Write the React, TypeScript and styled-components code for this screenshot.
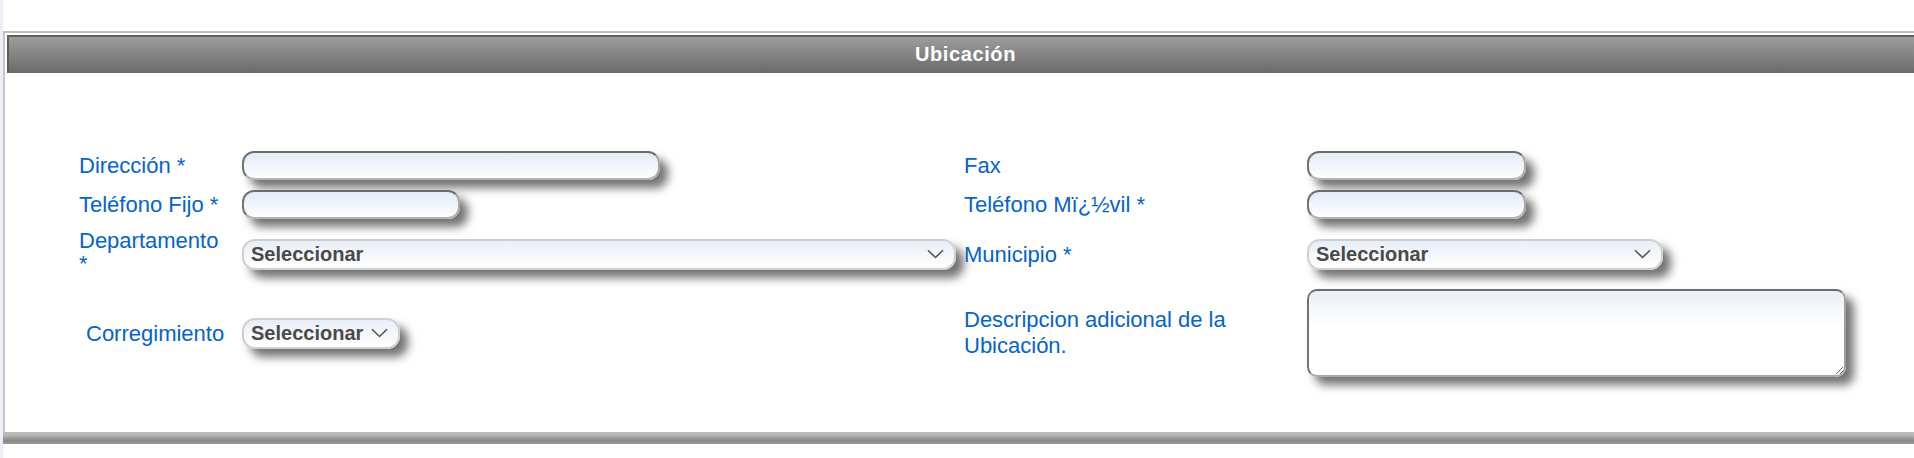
import React from "react";
import styled, { createGlobalStyle } from "styled-components";

const GlobalStyle = createGlobalStyle`
  html, body {
    margin: 0;
    padding: 0;
    background: #fff;
    overflow: hidden;
  }
  body {
    font-family: "Liberation Sans", Arial, sans-serif;
  }
`;

const Page = styled.div`
  min-height: 458px;
  box-sizing: border-box;
  border-left: 3px solid #eeeef7;
  padding-top: 31px;
`;

const Panel = styled.section`
  width: calc(100% + 8px);
  box-sizing: border-box;
  border-top: 2px solid #bdbdbd;
  border-left: 2px solid #c6c6c6;
  padding: 2px 0 0 2px;
`;

const PanelHeader = styled.h2`
  margin: 0;
  height: 38px;
  box-sizing: border-box;
  border-top: 2px solid #5e5e5e;
  border-left: 2px solid #5e5e5e;
  background: linear-gradient(#9d9d9d, #6a6a6a);
  color: #fff;
  font-size: 20px;
  font-weight: bold;
  letter-spacing: 0.6px;
  line-height: 35px;
  text-align: center;
`;

const FormGrid = styled.div`
  display: grid;
  grid-template-columns: 163px 722px 343px auto;
  grid-template-rows: 29px 29px 50px 88px;
  row-gap: 10px;
  align-items: center;
  padding: 78px 0 55px 72px;
`;

const Label = styled.label<{ $indent?: number; $top?: boolean; $lh?: number }>`
  color: #0563c9;
  font-size: 22px;
  line-height: ${(p) => p.$lh ?? 23}px;
  padding-left: ${(p) => p.$indent ?? 0}px;
  padding-right: 13px;
  align-self: ${(p) => (p.$top ? "start" : "center")};
`;

const Cell = styled.div`
  display: flex;
  align-items: center;
`;

const TextInput = styled.input<{ $w: number }>`
  width: ${(p) => p.$w}px;
  height: 29px;
  box-sizing: border-box;
  border-radius: 12px;
  border: 2px solid;
  border-color: #6c6c6c #a8a8a8 #b3b3b3 #747474;
  background: linear-gradient(#e4ebf6, #fdfeff);
  box-shadow: 8px 8px 10px rgba(0, 0, 0, 0.55);
  outline: none;
  padding: 0 10px;
  font: 18px "Liberation Sans", Arial, sans-serif;
`;

const SelectBox = styled.button<{ $w?: number }>`
  display: flex;
  align-items: center;
  justify-content: space-between;
  gap: 8px;
  width: ${(p) => (p.$w ? `${p.$w}px` : "auto")};
  height: 31px;
  box-sizing: border-box;
  padding: 0 10px 0 7px;
  border: 2px solid #cfcfcf;
  border-radius: 13px;
  background: linear-gradient(#e8eef8, #ffffff);
  box-shadow: 8px 8px 10px rgba(0, 0, 0, 0.55);
  color: #4a4a4a;
  font: bold 20px "Liberation Sans", Arial, sans-serif;
  cursor: pointer;
`;

const TextArea = styled.textarea`
  width: 539px;
  height: 88px;
  box-sizing: border-box;
  border-radius: 10px;
  border: 2px solid;
  border-color: #6c6c6c #a0a0a0 #a8a8a8 #747474;
  background: linear-gradient(#e9eff8, #ffffff 40%);
  box-shadow: 8px 8px 10px rgba(0, 0, 0, 0.55);
  outline: none;
  font: 18px "Liberation Sans", Arial, sans-serif;
`;

const FooterBar = styled.div`
  height: 12px;
  width: calc(100% + 8px);
  background: linear-gradient(#bcbcbc 0%, #b5b5b5 30%, #a2a2a2 45%, #888 70%, #9a9a9a 100%);
`;

const Chevron = () => (
  <svg width="17" height="10" viewBox="0 0 17 10" fill="none">
    <path d="M1 1.2 L8.5 8.5 L16 1.2" stroke="#555" strokeWidth="1.6" />
  </svg>
);

const Select = ({ width }: { width?: number }) => (
  <SelectBox type="button" $w={width}>
    <span>Seleccionar</span>
    <Chevron />
  </SelectBox>
);

export default function App() {
  return (
    <>
      <GlobalStyle />
      <Page>
        <Panel>
          <PanelHeader>Ubicación</PanelHeader>
          <FormGrid>
            <Label>Dirección *</Label>
            <Cell>
              <TextInput $w={418} />
            </Cell>
            <Label>Fax</Label>
            <Cell>
              <TextInput $w={219} />
            </Cell>

            <Label>Teléfono Fijo *</Label>
            <Cell>
              <TextInput $w={218} />
            </Cell>
            <Label>Teléfono Mï¿½vil *</Label>
            <Cell>
              <TextInput $w={219} />
            </Cell>

            <Label $top>Departamento *</Label>
            <Cell>
              <Select width={714} />
            </Cell>
            <Label>Municipio *</Label>
            <Cell>
              <Select width={356} />
            </Cell>

            <Label $indent={7}>Corregimiento</Label>
            <Cell>
              <Select />
            </Cell>
            <Label $lh={26}>Descripcion adicional de la Ubicación.</Label>
            <Cell>
              <TextArea />
            </Cell>
          </FormGrid>
        </Panel>
        <FooterBar />
      </Page>
    </>
  );
}
